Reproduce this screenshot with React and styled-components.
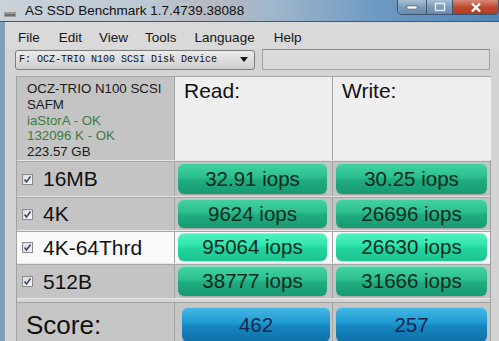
import React from 'react'
import styled, { createGlobalStyle } from 'styled-components'

const GlobalStyle = createGlobalStyle`
  html, body {
    margin: 0;
    padding: 0;
    background: #d2d2d2;
    overflow: hidden;
  }
  * { box-sizing: border-box; }
`

const Window = styled.div`
  width: 499px;
  height: 341px;
  overflow: hidden;
  display: flex;
  flex-direction: column;
  background: #7f9dbd;
  font-family: "Liberation Sans", Arial, sans-serif;
  color: #111;
`

const TitleBar = styled.div`
  height: 22px;
  flex: none;
  display: flex;
  align-items: center;
  padding-left: 3px;
  background: linear-gradient(90deg, #c9d2da 0%, #bcc8d3 30%, #b8b9c1 42%, #9fb6cc 55%, #6f9ac2 75%, #4f84b6 100%);
  border-bottom: 1px solid #3e5a78;
`

const TitleText = styled.span`
  margin-left: 8px;
  font-size: 13.5px;
  color: #111;
`

const Controls = styled.div`
  margin-left: auto;
  align-self: flex-start;
  display: flex;
  height: 15px;
  border: 1px solid #3d5670;
  border-top: none;
  border-radius: 0 0 5px 5px;
  overflow: hidden;
`

const CtlButton = styled.div`
  width: ${p => p.$w}px;
  display: flex;
  align-items: center;
  justify-content: center;
  background: ${p => p.$close
    ? 'linear-gradient(#d88a78, #c04a30 50%, #b23a22)'
    : 'linear-gradient(#a9bfd4, #7d9bb9 50%, #6a8aab)'};
  border-left: ${p => (p.$first ? 'none' : '1px solid #3d5670')};
`

const Client = styled.div`
  flex: 1;
  min-height: 0;
  overflow: hidden;
  margin-left: 4px;
  background: #d4d4d4;
  border-left: 1px solid #8fa3b8;
  display: flex;
  flex-direction: column;
`

const MenuBar = styled.div`
  height: 27px;
  flex: none;
  display: flex;
  align-items: center;
  padding: 3px 0 0 13px;
  background: #d9d9d9;
  font-size: 13.5px;
`

const MenuItem = styled.span`
  margin-right: ${p => p.$gap}px;
  color: #151515;
`

const ToolRow = styled.div`
  display: flex;
  align-items: center;
  gap: 7px;
  padding-left: 10px;
  height: 21px;
  flex: none;
`

const Select = styled.div`
  width: 240px;
  height: 20px;
  border: 1px solid #7c7c7c;
  border-radius: 3px;
  background: linear-gradient(#ececec, #dcdcdc 50%, #cfcfcf);
  display: flex;
  align-items: center;
  padding: 0 6px 0 3px;
  font-family: "Liberation Mono", "Courier New", monospace;
  font-size: 10px;
  color: #111;
`

const Arrow = styled.span`
  margin-left: auto;
  width: 0;
  height: 0;
  border-left: 4px solid transparent;
  border-right: 4px solid transparent;
  border-top: 5px solid #111;
`

const TextBox = styled.div`
  width: 228px;
  height: 21px;
  border: 1px solid #a4a4a4;
  border-top-color: #8e8e8e;
  background: #dadada;
`

const Table = styled.div`
  margin: 6px 0 0 11px;
  width: 475px;
  display: flex;
  flex-direction: column;
  border-left: 1px solid #a2a2a2;
  border-right: 1px solid #a2a2a2;
`

const Row = styled.div`
  display: grid;
  grid-template-columns: 158px 158px 158px;
  height: ${p => p.$h}px;
  background: ${p => (p.$hl ? '#f9f9f9' : '#c4c4c4')};
  border-top: 1px solid #a6a6a6;
  border-bottom: 1px solid #e6e6e6;
`

const Cell = styled.div`
  border-right: 1px solid #a2a2a2;
  &:last-child { border-right: none; }
  background: ${p => p.$bg || 'transparent'};
  padding: ${p => p.$pad || '0'};
  display: flex;
  flex-direction: ${p => (p.$col ? 'column' : 'row')};
  align-items: ${p => (p.$col ? 'flex-start' : 'center')};
`

const InfoLine = styled.div`
  font-size: 13.3px;
  line-height: 15.8px;
  color: ${p => (p.$ok ? '#3c7d3c' : '#1a1a1a')};
`

const ColHead = styled.div`
  font-size: 21px;
  line-height: 24px;
  color: #111;
`

const Check = styled.span`
  width: 11px;
  height: 11px;
  flex: none;
  border: 1px solid #8b8b8b;
  background: linear-gradient(135deg, #dcdcdc, #f6f6f6);
  display: flex;
  align-items: center;
  justify-content: center;
  margin-right: 10px;
`

const Label = styled.span`
  font-size: 21px;
  color: #111;
`

const Result = styled.div`
  flex: 1;
  height: 100%;
  border-radius: 6px;
  display: flex;
  align-items: center;
  justify-content: center;
  font-size: 20.5px;
  color: ${p => (p.$blue ? '#13284f' : '#102a20')};
  background: ${p => (p.$blue
    ? 'linear-gradient(#47b9e4 0%, #1f9bd3 45%, #1686c0 55%, #106fa8 100%)'
    : p.$hl
      ? 'linear-gradient(#52f2c1 0%, #2ee4ad 45%, #22d49e 55%, #1cc493 100%)'
      : 'linear-gradient(#45d3a6 0%, #2bbf8f 45%, #20ac80 55%, #179a72 100%)')};
  box-shadow: inset 0 1px 0 rgba(255, 255, 255, 0.35), 0 1px 1px rgba(0, 0, 0, 0.15);
`

const ScoreRow = styled.div`
  margin-top: 3px;
  display: grid;
  grid-template-columns: 158px 158px 158px;
  height: 40px;
  flex: none;
  background: #c6c6c6;
  border-top: 1px solid #a2a2a2;
`

const ScoreLabel = styled.span`
  font-size: 26px;
  color: #111;
`

const DriveIcon = () => (
  <svg width="14" height="14" viewBox="0 0 14 14">
    <rect x="1" y="3" width="12" height="10" rx="1" fill="#9a9a9a" />
    <rect x="1" y="3" width="12" height="5" fill="#d0d0d0" />
    <rect x="2" y="10" width="10" height="2" fill="#6e6e6e" />
  </svg>
)

const CheckMark = () => (
  <svg width="9" height="9" viewBox="0 0 9 9">
    <path d="M1.5 4.5 L3.5 7 L7.5 1.5" stroke="#3a4a6a" strokeWidth="1.6" fill="none" />
  </svg>
)

const menu = [
  ['File', 19],
  ['Edit', 17],
  ['View', 17],
  ['Tools', 18],
  ['Language', 19],
  ['Help', 0],
]

const rows = [
  { name: '16MB', read: '32.91 iops', write: '30.25 iops', h: 36 },
  { name: '4K', read: '9624 iops', write: '26696 iops', h: 34 },
  { name: '4K-64Thrd', read: '95064 iops', write: '26630 iops', h: 33, hl: true },
  { name: '512B', read: '38777 iops', write: '31666 iops', h: 35 },
]

export default function App() {
  return (
    <>
      <GlobalStyle />
      <Window>
        <TitleBar>
          <DriveIcon />
          <TitleText>AS SSD Benchmark 1.7.4739.38088</TitleText>
          <Controls>
            <CtlButton $w={28} $first>
              <svg width="12" height="5"><rect x="1" y="1" width="10" height="3" fill="#fff" stroke="#3d5670" strokeWidth="0.6" /></svg>
            </CtlButton>
            <CtlButton $w={26}>
              <svg width="12" height="10"><rect x="1.5" y="1.5" width="9" height="7" fill="none" stroke="#e8eef4" strokeWidth="1.4" /></svg>
            </CtlButton>
            <CtlButton $w={46} $close>
              <svg width="12" height="11"><path d="M2 1.5 L10 9.5 M10 1.5 L2 9.5" stroke="#fff" strokeWidth="2.4" /></svg>
            </CtlButton>
          </Controls>
        </TitleBar>
        <Client>
          <MenuBar>
            {menu.map(([m, g]) => (
              <MenuItem key={m} $gap={g}>{m}</MenuItem>
            ))}
          </MenuBar>
          <ToolRow>
            <Select>
              F: OCZ-TRIO N100 SCSI Disk Device
              <Arrow />
            </Select>
            <TextBox />
          </ToolRow>
          <Table>
            <Row $h={85}>
              <Cell $col $pad="4px 0 0 10px">
                <InfoLine>OCZ-TRIO N100 SCSI</InfoLine>
                <InfoLine>SAFM</InfoLine>
                <InfoLine $ok>iaStorA - OK</InfoLine>
                <InfoLine $ok>132096 K - OK</InfoLine>
                <InfoLine>223.57 GB</InfoLine>
              </Cell>
              <Cell $col $bg="#efefef" $pad="2px 0 0 9px">
                <ColHead>Read:</ColHead>
              </Cell>
              <Cell $col $bg="#efefef" $pad="2px 0 0 9px">
                <ColHead>Write:</ColHead>
              </Cell>
            </Row>
            {rows.map(r => (
              <Row key={r.name} $h={r.h} $hl={r.hl}>
                <Cell $pad="0 0 0 5px">
                  <Check><CheckMark /></Check>
                  <Label>{r.name}</Label>
                </Cell>
                <Cell $pad="1px 5px 2px 3px">
                  <Result $hl={r.hl}>{r.read}</Result>
                </Cell>
                <Cell $pad="1px 4px 2px 3px">
                  <Result $hl={r.hl}>{r.write}</Result>
                </Cell>
              </Row>
            ))}
            <ScoreRow>
              <Cell $pad="5px 0 0 9px">
                <ScoreLabel>Score:</ScoreLabel>
              </Cell>
              <Cell $pad="4px 2px 0 7px">
                <Result $blue>462</Result>
              </Cell>
              <Cell $pad="4px 4px 0 3px">
                <Result $blue>257</Result>
              </Cell>
            </ScoreRow>
          </Table>
        </Client>
      </Window>
    </>
  )
}
